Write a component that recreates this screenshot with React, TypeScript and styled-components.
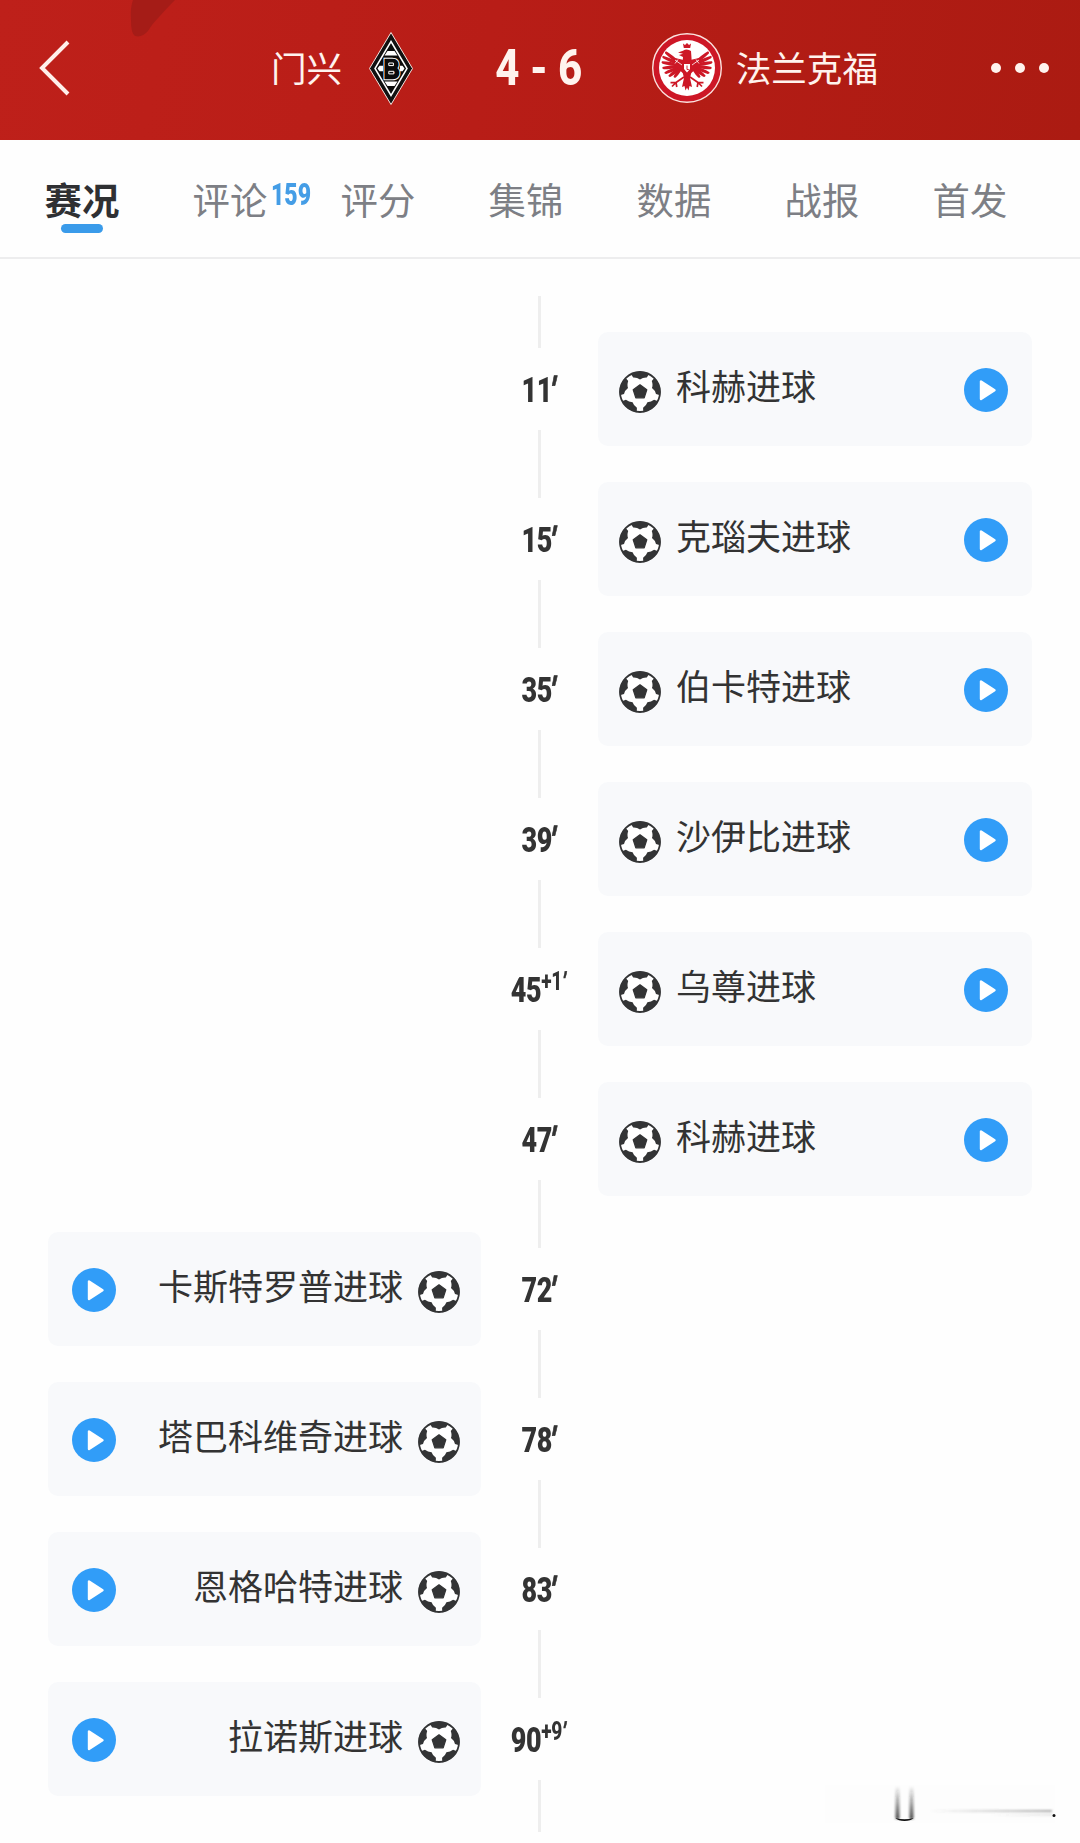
import styled, { createGlobalStyle } from 'styled-components'

type Side = 'home' | 'away'

interface MatchEvent {
    minute: string
    extra?: string
    text: string
    side: Side
}

const events: MatchEvent[] = [
    { minute: '11', text: '科赫进球', side: 'away' },
    { minute: '15', text: '克瑙夫进球', side: 'away' },
    { minute: '35', text: '伯卡特进球', side: 'away' },
    { minute: '39', text: '沙伊比进球', side: 'away' },
    { minute: '45', extra: '+1', text: '乌尊进球', side: 'away' },
    { minute: '47', text: '科赫进球', side: 'away' },
    { minute: '72', text: '卡斯特罗普进球', side: 'home' },
    { minute: '78', text: '塔巴科维奇进球', side: 'home' },
    { minute: '83', text: '恩格哈特进球', side: 'home' },
    { minute: '90', extra: '+9', text: '拉诺斯进球', side: 'home' },
]

const tabs = [
    { label: '赛况', active: true },
    { label: '评论', count: 159 },
    { label: '评分' },
    { label: '集锦' },
    { label: '数据' },
    { label: '战报' },
    { label: '首发' },
]

const GlobalStyle = createGlobalStyle`
    * {
        box-sizing: border-box;
    }
    body {
        margin: 0;
        background: #fefefe;
        font-family: 'Noto Sans CJK SC', sans-serif;
        color: #333;
    }
    svg {
        display: block;
        flex: none;
    }
`

const Page = styled.div`
    position: relative;
    width: 1080px;
    height: 1843px;
    overflow: hidden;
`

const Header = styled.header`
    position: relative;
    display: grid;
    grid-template-columns: 271px 142px 1fr 226px 202px;
    align-items: center;
    height: 140px;
    padding-bottom: 4px;
    background: linear-gradient(100deg, #be201a 0%, #b81d17 45%, #ab1b12 100%);
    color: #fff3ee;
`

const HeaderShade = styled.svg`
    position: absolute;
    left: 130px;
    top: 0;
`

const BackButton = styled.div`
    padding-left: 38px;
`

const Team = styled.div`
    display: flex;
    align-items: center;
    justify-content: space-between;
`

const TeamName = styled.span`
    padding-bottom: 2px;
    font-size: 35.6px;
    line-height: 50px;
    white-space: nowrap;
`

const Score = styled.div`
    display: flex;
    justify-content: center;
    padding-left: 15px;
    font-family: Roboto, sans-serif;
    font-size: 50px;
    font-weight: 800;
    line-height: 60px;
    white-space: nowrap;
    transform: scaleX(0.84);
`

const MoreButton = styled.div`
    display: flex;
    justify-content: flex-end;
    gap: 14px;
    padding-right: 31px;
`

const Dot = styled.i`
    width: 10px;
    height: 10px;
    border-radius: 50%;
    background: #fff3ee;
`

const TabBar = styled.nav`
    display: flex;
    height: 119px;
    padding-left: 8px;
    border-bottom: 2px solid #ededee;
`

const Tab = styled.div<{ $active?: boolean }>`
    position: relative;
    width: 148px;
    padding-top: 32px;
    text-align: center;
    font-size: 37.4px;
    line-height: 54px;
    font-weight: ${(props) => (props.$active ? 700 : 400)};
    color: ${(props) => (props.$active ? '#2f3033' : '#7d7f85')};
`

const TabMarker = styled.div`
    position: absolute;
    left: 53px;
    top: 84px;
    width: 42px;
    height: 9px;
    border-radius: 5px;
    background: #3a9bea;
`

const TabCount = styled.span`
    position: absolute;
    left: 115px;
    top: 37px;
    font-family: Roboto, sans-serif;
    font-size: 32px;
    font-weight: 900;
    line-height: 34px;
    color: #449de6;
    transform: scaleX(0.72);
    transform-origin: left;
`

const Timeline = styled.main`
    display: flex;
    flex-direction: column;
    align-items: center;
    width: 984px;
    margin-left: 48px;
    padding-top: 37px;
`

const LineCap = styled.div`
    width: 3px;
    height: 18px;
    margin-right: 1px;
    background: #eee;
`

const Row = styled.div`
    display: grid;
    grid-template-columns: 433px 117px 434px;
    align-items: center;
    width: 984px;
    height: 150px;
`

const Axis = styled.div`
    grid-column: 2;
    grid-row: 1;
    display: flex;
    flex-direction: column;
    align-items: center;
    height: 150px;
`

const Line = styled.div`
    flex: 1;
    width: 3px;
    background: #eee;
`

const Minute = styled.div`
    display: flex;
    align-items: center;
    height: 82px;
    padding: 2px 5px 0 0;
    font-family: Roboto, sans-serif;
    font-size: 35px;
    font-weight: 900;
    letter-spacing: -0.5px;
    white-space: nowrap;
    transform: scaleX(0.77);
`

const Prime = styled.span`
    margin-left: -2px;
    -webkit-text-stroke: 0.8px #333;
    transform: skewX(-14deg);
`

const Extra = styled.sup`
    display: flex;
    align-self: flex-start;
    margin-top: 18px;
    font-size: 25px;
    font-weight: 800;
    line-height: 28px;

    ${Prime} {
        margin-left: 1px;
        -webkit-text-stroke-width: 0.4px;
    }
`

const Card = styled.div<{ $side: Side }>`
    grid-column: ${(props) => (props.$side === 'home' ? 1 : 3)};
    grid-row: 1;
    display: flex;
    flex-direction: ${(props) => (props.$side === 'home' ? 'row-reverse' : 'row')};
    align-items: center;
    gap: 15px;
    height: 114px;
    padding: ${(props) => (props.$side === 'home' ? '0 21px 0 24px' : '0 24px 0 21px')};
    border-radius: 10px;
    background: #f8f9fb;
`

const CardText = styled.span<{ $side: Side }>`
    flex: 1;
    padding-bottom: 8px;
    font-size: 35px;
    line-height: 50px;
    text-align: ${(props) => (props.$side === 'home' ? 'right' : 'left')};
    white-space: nowrap;
`

const BallIcon = styled.svg`
    position: relative;
    top: 3px;
`

const PlayIcon = styled.svg`
    position: relative;
    top: 1px;
`

const Smudge = styled.svg`
    position: absolute;
    left: 820px;
    top: 1780px;
`

const Ball = () => (
    <BallIcon width="42" height="42" viewBox="-21 -21 42 42">
        <circle r="20" fill="#fff" stroke="#333435" strokeWidth="1.8" />
        <g fill="#333435">
            <path
                d="M0-7.2 6.8-2.2 4.2 5.8h-8.4L-6.8-2.2z"
                stroke="#333435"
                strokeWidth="1.2"
                strokeLinejoin="round"
            />
            {[0, 72, 144, 216, 288].map((angle) => (
                <path
                    key={angle}
                    transform={`rotate(${angle})`}
                    d="M-9.2-18.2-6.8-14.6Q-3-14.8 0-12.6 3-14.8 6.8-14.6L9.2-18.2A20.4 20.4 0 0 0-9.2-18.2z"
                />
            ))}
        </g>
    </BallIcon>
)

const Play = () => (
    <PlayIcon width="44" height="44" viewBox="0 0 44 44">
        <circle cx="22" cy="22" r="22" fill="#319df8" />
        <path
            d="M17 13.5v17.5L30.5 22.2z"
            fill="#fff"
            stroke="#fff"
            strokeWidth="2.4"
            strokeLinejoin="round"
        />
    </PlayIcon>
)

const HomeCrest = () => (
    <svg width="44" height="73" viewBox="-22 -36.5 44 73">
        <path d="M0-36 21.5 0 0 36-21.5 0z" fill="#111" stroke="#f6e4e0" strokeWidth="1" />
        <path d="M0-27 16 0 0 27-16 0z" fill="#0b0b0b" stroke="#fff" strokeWidth="1.5" />
        <path d="M-3.5-17.5h7l3 4.5h-13zM-3.5 17.5h7l3-4.5h-13z" fill="#fff" />
        <path d="M-13.5 0l2-2.7h3.6v5.4h-3.6zM13.5 0l-2-2.7H9v5.4h2.5z" fill="#fff" />
        <g transform="scale(.82 1)">
            <text
                x="0.8"
                y="9"
                textAnchor="middle"
                fontFamily="'Liberation Sans', sans-serif"
                fontWeight="700"
                fontSize="26"
                fill="#fff"
                stroke="#fff"
                strokeWidth="4.6"
            >
                B
            </text>
            <text
                x="0.8"
                y="9"
                textAnchor="middle"
                fontFamily="'Liberation Sans', sans-serif"
                fontWeight="700"
                fontSize="26"
                fill="#0b0b0b"
                stroke="#0b0b0b"
                strokeWidth="2.4"
            >
                B
            </text>
        </g>
        <path d="M-2.2-5.5h4.6v2.6h-4.6zM-2.2 2.8h5v2.6h-5z" fill="#0b0b0b" stroke="#fff" strokeWidth="1" />
    </svg>
)

const feathers = [
    { angle: -38, length: 22 },
    { angle: -24, length: 22 },
    { angle: -9, length: 21 },
    { angle: 7, length: 20 },
    { angle: 23, length: 19 },
    { angle: 39, length: 17 },
    { angle: 56, length: 14 },
]

const Wing = ({ flip }: { flip?: boolean }) => (
    <g transform={flip ? 'scale(-1 1)' : undefined}>
        {feathers.map(({ angle, length }) => (
            <path
                key={angle}
                transform={`translate(4.5 -2) rotate(${angle})`}
                d={`M0-1.2Q${length * 0.7}-2.6 ${length} -1.4Q${length + 1} .2 ${length - 1} 1Q${length * 0.6} 1.8 0 1.2z`}
            />
        ))}
        <path d="M0-7Q7-9 12-10Q13-4 9 1L3 6z" />
        <path
            d="M3 9 11 14.5M11 14.5l5.5.2M11 14.5l4 4M11 14.5l-.8 4.5"
            fill="none"
            stroke="#cd1726"
            strokeWidth="1.7"
        />
        <path d="M5-3 12-8M9-8.5l3 4" stroke="#fff" strokeWidth=".8" />
    </g>
)

const AwayCrest = () => (
    <svg width="72" height="72" viewBox="-35 -36 72 72">
        <circle r="34.3" fill="#cd1726" stroke="#fbe3df" strokeWidth="1.4" />
        <circle r="28" fill="#fff" />
        <g fill="#cd1726">
            <Wing />
            <Wing flip />
            <path d="M-4-24.5l2 1.5 2-2 2 2 2-1.5-.8 4.5h-6.4z" />
            <path d="M-9-15.5l5-1.8Q0-20 4-17L4.5-10 5 2 3 10 5 19 2.5 18 1.5 22.5 0 19.5-1.5 22.5-2.5 18-5 19-3 10-5 2-4-11-8-13l4-1.3z" />
        </g>
        <path d="M-3-4h6V1L0 4.5-3 1z" fill="#fff" />
        <path d="M0-2.5V1.5h1.8" fill="none" stroke="#cd1726" strokeWidth=".9" />
    </svg>
)

const App = () => (
    <Page>
        <GlobalStyle />
        <Header>
            <HeaderShade width="46" height="38" viewBox="0 0 46 38">
                <path d="M3 0H45Q36 9 30 16 22 24 18 31 12 38 5 36 1 34 1 20 0 8 3 0z" fill="#a51c17" />
            </HeaderShade>
            <BackButton>
                <svg width="34" height="58" viewBox="0 0 34 58">
                    <path d="M30 3 4 29l26 26" fill="none" stroke="#ffefea" strokeWidth="4" />
                </svg>
            </BackButton>
            <Team>
                <TeamName>门兴</TeamName>
                <HomeCrest />
            </Team>
            <Score>4 - 6</Score>
            <Team>
                <AwayCrest />
                <TeamName>法兰克福</TeamName>
            </Team>
            <MoreButton>
                <Dot />
                <Dot />
                <Dot />
            </MoreButton>
        </Header>
        <TabBar>
            {tabs.map((tab) => (
                <Tab key={tab.label} $active={tab.active}>
                    {tab.label}
                    {tab.active ? <TabMarker /> : null}
                    {tab.count ? <TabCount>{tab.count}</TabCount> : null}
                </Tab>
            ))}
        </TabBar>
        <Timeline>
            <LineCap />
            {events.map((event) => (
                <Row key={event.minute}>
                    <Axis>
                        <Line />
                        <Minute>
                            {event.minute}
                            {event.extra ? (
                                <Extra>
                                    {event.extra}
                                    <Prime>′</Prime>
                                </Extra>
                            ) : (
                                <Prime>′</Prime>
                            )}
                        </Minute>
                        <Line />
                    </Axis>
                    <Card $side={event.side}>
                        <Ball />
                        <CardText $side={event.side}>{event.text}</CardText>
                        <Play />
                    </Card>
                </Row>
            ))}
            <LineCap />
        </Timeline>
        <Smudge width="240" height="50" viewBox="0 0 240 50">
            <defs>
                <linearGradient id="fadeDown" x1="0" y1="0" x2="0" y2="1">
                    <stop offset="0" stopColor="#222" stopOpacity="0" />
                    <stop offset="1" stopColor="#222" stopOpacity=".8" />
                </linearGradient>
                <linearGradient id="fadeRight">
                    <stop offset="0" stopColor="#555" stopOpacity="0" />
                    <stop offset="1" stopColor="#555" stopOpacity=".5" />
                </linearGradient>
                <filter id="soft">
                    <feGaussianBlur stdDeviation=".8" />
                </filter>
            </defs>
            <rect x="5" y="5" width="230" height="38" fill="#fdfdfd" />
            <g filter="url(#soft)">
                <rect x="75.5" y="6" width="4" height="33" fill="url(#fadeDown)" />
                <rect x="89.5" y="6" width="4" height="33" fill="url(#fadeDown)" />
                <rect x="110" y="30" width="122" height="2" fill="url(#fadeRight)" />
                <rect x="170" y="34" width="62" height="1.5" fill="url(#fadeRight)" opacity=".4" />
            </g>
            <path d="M75.5 38Q84.5 40.5 93.5 38 91 41 84.5 41T75.5 38z" fill="#111" />
            <circle cx="234" cy="35.4" r="1.5" fill="#111" />
        </Smudge>
    </Page>
)

export default App
